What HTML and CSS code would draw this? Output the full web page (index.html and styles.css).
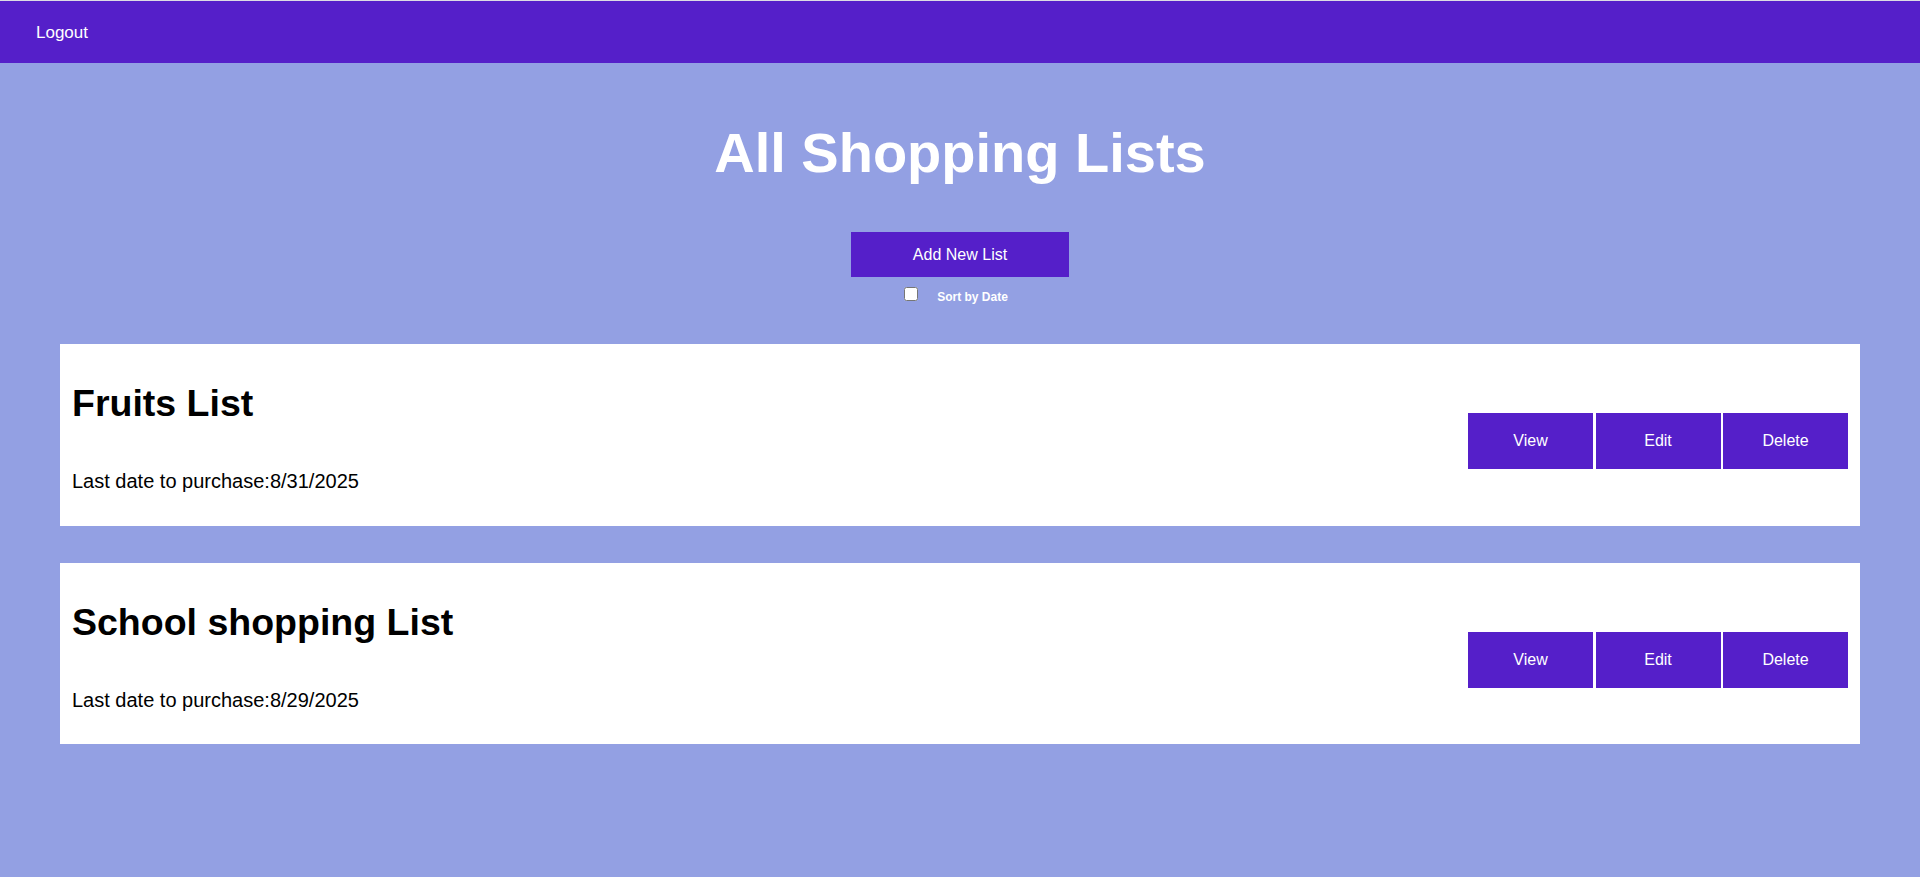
FILE: index.html
```html
<!DOCTYPE html>
<html lang="en">
<head>
<meta charset="utf-8">
<title>All Shopping Lists</title>
<link rel="stylesheet" href="styles.css">
</head>
<body>
<nav class="navbar">
  <a class="nav-link" href="#">Logout</a>
</nav>
<main class="page">
  <h1 class="page-title">All Shopping Lists</h1>
  <button class="add-btn" type="button">Add New List</button>
  <div class="sort-row">
    <input class="sort-check" type="checkbox" id="sort">
    <label class="sort-label" for="sort">Sort by Date</label>
  </div>
  <section class="lists">
    <article class="card">
      <div class="card-info">
        <h2 class="card-title">Fruits List</h2>
        <p class="card-date">Last date to purchase:8/31/2025</p>
      </div>
      <div class="card-actions">
        <button class="action-btn" type="button">View</button>
        <button class="action-btn" type="button">Edit</button>
        <button class="action-btn" type="button">Delete</button>
      </div>
    </article>
    <article class="card">
      <div class="card-info">
        <h2 class="card-title">School shopping List</h2>
        <p class="card-date">Last date to purchase:8/29/2025</p>
      </div>
      <div class="card-actions">
        <button class="action-btn" type="button">View</button>
        <button class="action-btn" type="button">Edit</button>
        <button class="action-btn" type="button">Delete</button>
      </div>
    </article>
  </section>
</main>
</body>
</html>
```

FILE: styles.css
```css
* {
  box-sizing: border-box;
}

html, body {
  margin: 0;
  padding: 0;
}

body {
  min-height: 100vh;
  background: #93a0e3;
  font-family: "Liberation Sans", Arial, sans-serif;
  color: #000;
}

.navbar {
  height: 63px;
  border-top: 1px solid #dcdce4;
  background: #551fc9;
  display: flex;
  align-items: center;
  padding-left: 36px;
}

.nav-link {
  color: #fff;
  text-decoration: none;
  font-size: 17px;
  line-height: 19px;
  margin-top: 0;
}

.page {
  padding-top: 58px;
  display: flex;
  flex-direction: column;
  align-items: center;
}

.page-title {
  margin: 0;
  font-size: 56px;
  line-height: 64px;
  font-weight: bold;
  color: #fff;
  text-align: center;
}

.add-btn {
  margin-top: 47px;
  width: 218px;
  height: 45px;
  border: none;
  background: #551fc9;
  color: #fff;
  font-family: "Liberation Sans", Arial, sans-serif;
  font-size: 16px;
  padding: 0;
  cursor: pointer;
}

.sort-row {
  margin-top: 10px;
  height: 15px;
  display: flex;
  align-items: flex-start;
  justify-content: center;
}

.sort-check {
  width: 14px;
  height: 14px;
  margin: 0;
}

.sort-label {
  margin-left: 19px;
  padding-right: 8px;
  margin-top: 3px;
  font-size: 12px;
  line-height: 14px;
  font-weight: bold;
  color: #fff;
}

.lists {
  align-self: stretch;
  margin: 42px 60px 0;
  display: flex;
  flex-direction: column;
  gap: 37px;
}

.card {
  background: #fff;
  padding: 38px 12px 32.5px;
  display: flex;
  justify-content: space-between;
  align-items: flex-start;
}

.card-title {
  margin: 0 0 46px;
  font-size: 37.5px;
  line-height: 42px;
  font-weight: bold;
}

.card-date {
  margin: 0;
  font-size: 20px;
  line-height: 23px;
}

.card-actions {
  margin-top: 31px;
  display: flex;
  gap: 2.5px;
}

.action-btn {
  width: 125px;
  height: 56px;
  border: none;
  padding: 0;
  background: #551fc9;
  color: #fff;
  font-family: "Liberation Sans", Arial, sans-serif;
  font-size: 16px;
  cursor: pointer;
}
```
